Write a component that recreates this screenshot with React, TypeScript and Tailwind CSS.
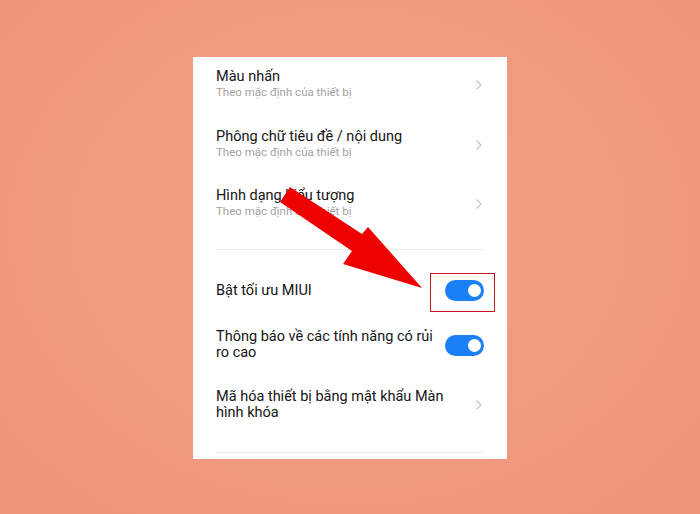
import React from "react";

function Chevron() {
  return (
    <svg width="8" height="12" viewBox="0 0 8 12" className="shrink-0">
      <path d="M1.5 1.5 L6 6 L1.5 10.5" fill="none" stroke="#c4c4c4" strokeWidth="1.2" />
    </svg>
  );
}

function Toggle() {
  return (
    <div className="w-[39px] h-[21px] rounded-full bg-[#1a80f6] flex items-center justify-end pr-[3px] shrink-0">
      <div className="w-[13px] h-[13px] rounded-full bg-white" />
    </div>
  );
}

function NavRow({ title, sub, className }: { title: string; sub: string; className?: string }) {
  return (
    <div className={`flex items-center justify-between ${className ?? ""}`}>
      <div className="flex flex-col">
        <span className="text-[14.5px] leading-[17px] text-[#151515]">{title}</span>
        <span className="text-[11.5px] leading-[15px] text-[#a3a3a3]">{sub}</span>
      </div>
      <div className="pr-[1px] pt-[2px]">
        <Chevron />
      </div>
    </div>
  );
}

export default function App() {
  const sub = "Theo mặc định của thiết bị";
  return (
    <div
      className="relative w-[700px] h-[514px] overflow-hidden pt-[57px] bg-[radial-gradient(ellipse_at_50%_45%,#f3a083_0%,#f19a7e_55%,#f09479_100%)]"
      style={{ fontFamily: "Roboto, 'Noto Sans', sans-serif" }}
    >
      <div className="mx-auto w-[314px] h-[402px] bg-white pl-[23px] pr-[23px] pt-[11px] flex flex-col">
        <NavRow title="Màu nhấn" sub={sub} />
        <NavRow title="Phông chữ tiêu đề / nội dung" sub={sub} className="mt-[28px]" />
        <NavRow title="Hình dạng biểu tượng" sub={sub} className="mt-[27px]" />
        <div className="mt-[30px] h-px bg-[#ececec]" />

        <div className="mt-[30px] flex items-center justify-between">
          <span className="text-[14.5px] leading-[17px] text-[#151515]">Bật tối ưu MIUI</span>
          <div className="relative">
            <Toggle />
            <div className="absolute left-[-15px] top-[-7px] w-[65px] h-[39px] border-[1.5px] border-[#c8141e]" />
          </div>
        </div>

        <div className="mt-[28px] flex items-center justify-between">
          <span className="w-[226px] text-[14.5px] leading-[16px] text-[#151515]">
            Thông báo về các tính năng có rủi ro cao
          </span>
          <Toggle />
        </div>

        <div className="mt-[28px] flex items-center justify-between">
          <span className="w-[240px] text-[14.5px] leading-[16px] text-[#151515]">
            Mã hóa thiết bị bằng mật khẩu Màn hình khóa
          </span>
          <div className="pr-[1px]">
            <Chevron />
          </div>
        </div>

        <div className="mt-[31px] h-px bg-[#ececec]" />
      </div>

      <svg className="absolute left-0 top-0" width="700" height="514" viewBox="0 0 700 514">
        <polygon
          points="290,187 362,234 368,227 422,288 343,264 352,251 280,202"
          fill="#ee0000"
        />
      </svg>
    </div>
  );
}
